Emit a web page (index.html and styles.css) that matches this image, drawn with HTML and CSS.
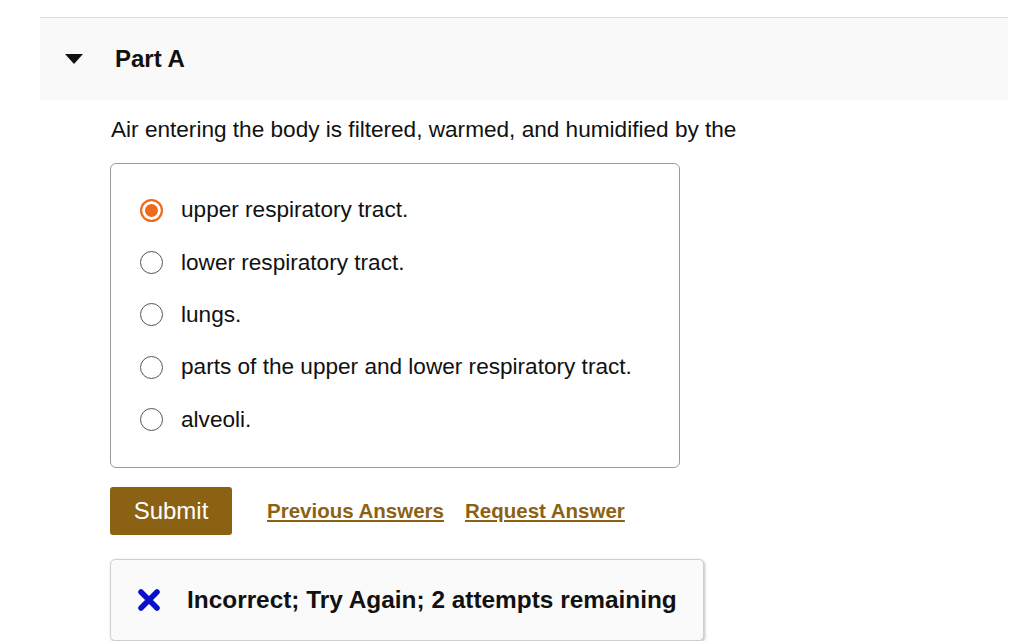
FILE: index.html
```html
<!DOCTYPE html>
<html lang="en">

<head>
    <meta charset="UTF-8" />
    <meta name="viewport" content="width=device-width, initial-scale=1.0" />
    <title>Part A</title>
    <link rel="stylesheet" href="styles.css">
</head>

<body>
    <div class="part">
        <div class="part-header">
            <span class="toggle"></span>
            <h2>Part A</h2>
        </div>
        <div class="part-body">
            <p class="question">Air entering the body is filtered, warmed, and humidified by the</p>
            <div class="choices">
                <label class="choice">
                    <span class="radio checked"></span>
                    <span>upper respiratory tract.</span>
                </label>
                <label class="choice">
                    <span class="radio"></span>
                    <span>lower respiratory tract.</span>
                </label>
                <label class="choice">
                    <span class="radio"></span>
                    <span>lungs.</span>
                </label>
                <label class="choice">
                    <span class="radio"></span>
                    <span>parts of the upper and lower respiratory tract.</span>
                </label>
                <label class="choice">
                    <span class="radio"></span>
                    <span>alveoli.</span>
                </label>
            </div>
            <div class="actions">
                <button type="button" class="submit">Submit</button>
                <a href="#">Previous Answers</a>
                <a href="#">Request Answer</a>
            </div>
            <div class="feedback">
                <svg class="cross" width="24" height="24" viewBox="0 0 24 24">
                    <path d="M4 4 L20 20 M20 4 L4 20" stroke="#0a10c8" stroke-width="5.5" stroke-linecap="round" />
                </svg>
                <span>Incorrect; Try Again; 2 attempts remaining</span>
            </div>
        </div>
    </div>
</body>

</html>
```

FILE: styles.css
```css
body {
    margin: 0;
    padding: 17px 16px 0 40px;
    background-color: #fff;
    font-family: "Liberation Sans", Arial, sans-serif;
    color: #111;
}

.part-header {
    display: flex;
    align-items: center;
    height: 82px;
    border-top: 1px solid #dcdcdc;
    background-color: #f9f9f9;
}

.toggle {
    width: 0;
    height: 0;
    margin-left: 25px;
    border-left: 9px solid transparent;
    border-right: 9px solid transparent;
    border-top: 10px solid #111;
}

.part-header h2 {
    margin: 0 0 0 32px;
    font-size: 24px;
    font-weight: bold;
}

.part-body {
    padding-left: 70px;
}

.question {
    margin: 17px 0 20px 1px;
    font-size: 22.6px;
}

.choices {
    width: 536px;
    padding: 20px 16px 21px 16px;
    border: 1.5px solid #9a9a9a;
    border-radius: 6px;
}

.choice {
    display: flex;
    align-items: center;
    gap: 18px;
    height: 52.4px;
    padding-left: 13px;
    font-size: 22.6px;
}

.radio {
    box-sizing: border-box;
    width: 23px;
    height: 23px;
    border: 1.5px solid #555;
    border-radius: 50%;
    background-color: #fff;
}

.radio.checked {
    border: 2px solid #f06a1c;
    box-shadow: inset 0 0 0 3px #fff;
    background-color: #f06a1c;
}

.actions {
    display: flex;
    align-items: center;
    margin-top: 19px;
}

.submit {
    width: 122px;
    height: 48px;
    border: none;
    border-radius: 3px;
    background-color: #8b6214;
    color: #fff;
    font-family: inherit;
    font-size: 24px;
    cursor: pointer;
}

.actions a {
    margin-left: 35px;
    color: #8b6214;
    font-size: 20.5px;
    font-weight: bold;
    text-decoration: underline;
}

.actions a + a {
    margin-left: 21px;
}

.feedback {
    display: flex;
    align-items: center;
    gap: 26px;
    width: 566px;
    height: 80px;
    margin-top: 24px;
    padding-left: 26px;
    border: 1px solid #cfcfcf;
    border-radius: 5px;
    background-color: #fafafa;
    box-shadow: 1px 1px 3px rgba(0, 0, 0, 0.25);
    font-size: 24.4px;
    font-weight: bold;
}
```
